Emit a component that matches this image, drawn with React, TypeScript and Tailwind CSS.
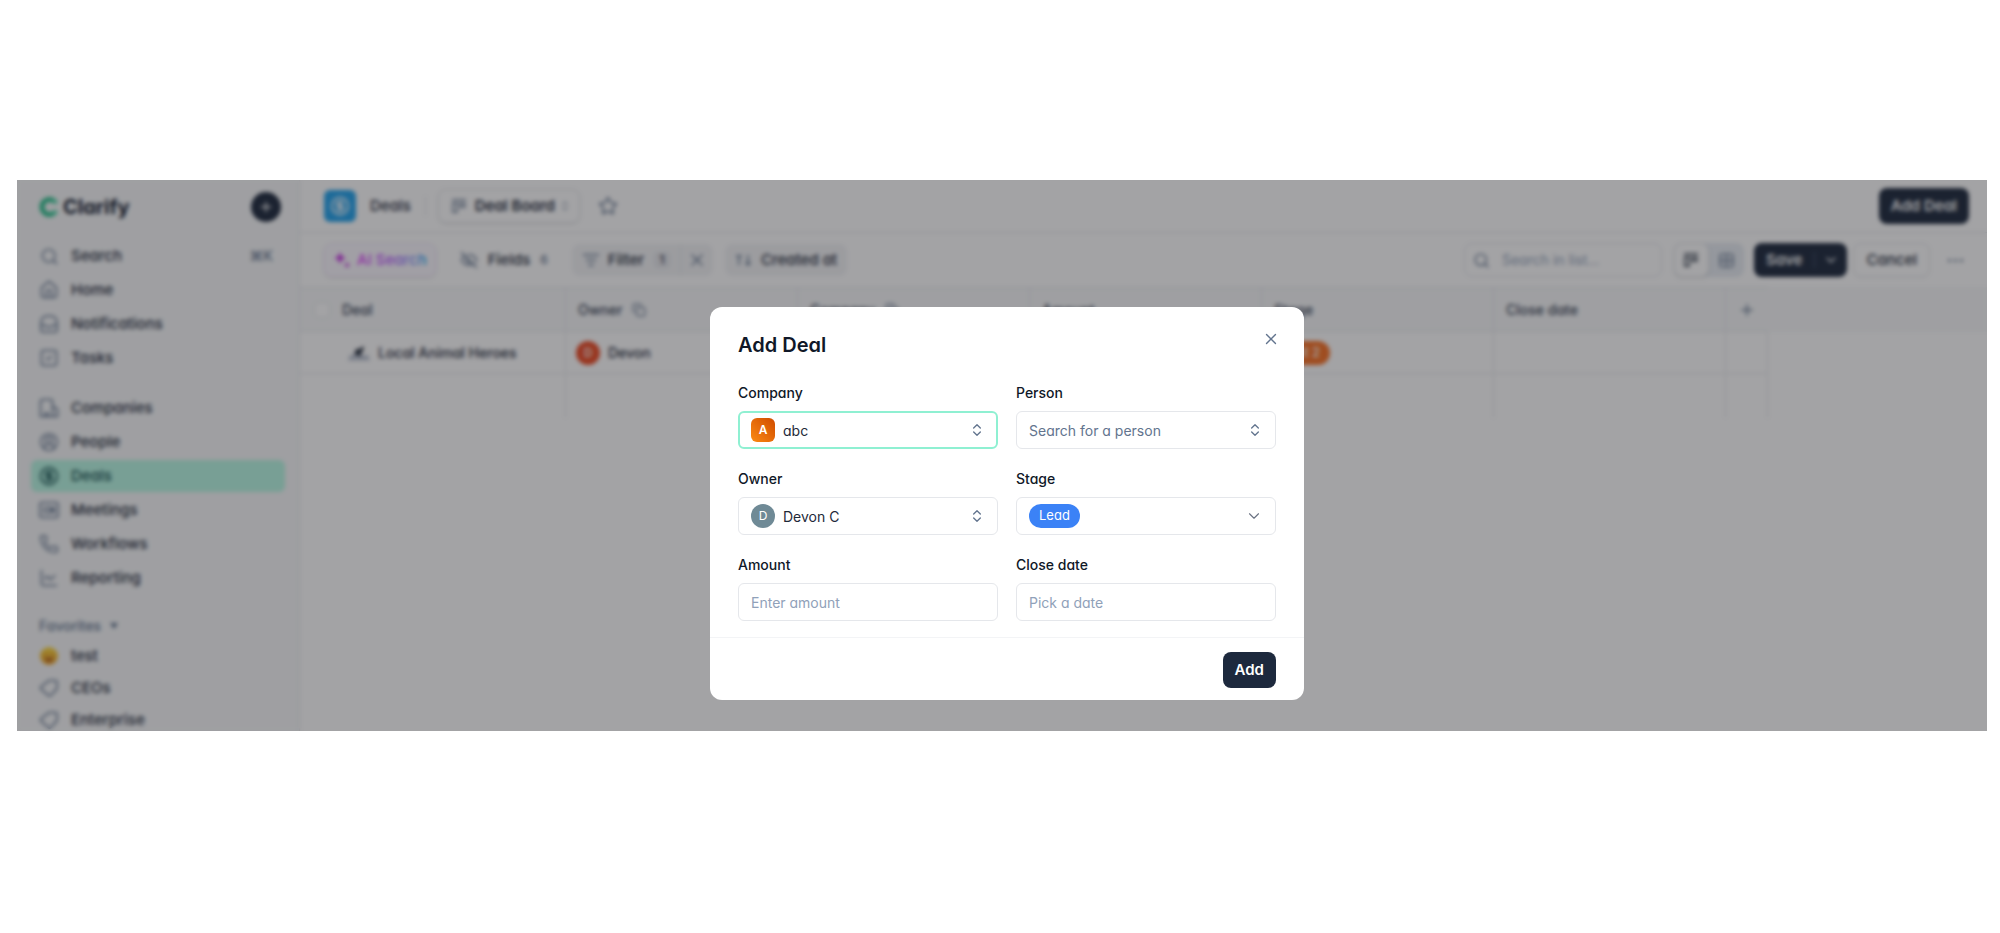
import type { ReactNode } from 'react';
import {
  ChartLine,
  ChevronDown,
  ChevronsUpDown,
  CircleDollarSign,
  CircleUserRound,
  Copy,
  EyeOff,
  Grid2x2,
  House,
  ListFilter,
  Phone,
  Plus,
  Search,
  SquareCheck,
  Star,
  X,
} from 'lucide-react';

const InboxIcon = () => (
  <svg width="20" height="20" viewBox="0 0 20 20" fill="none" stroke="currentColor" strokeWidth="1.6">
    <path d="M2 16V8a6 6 0 0 1 6-6h4a6 6 0 0 1 6 6v8a2 2 0 0 1-2 2H4a2 2 0 0 1-2-2Z" />
    <path d="M2 11h4l1.5 2h5l1.5-2h4" />
  </svg>
);

const CompanyIcon = () => (
  <svg width="20" height="20" viewBox="0 0 20 20" fill="none" stroke="currentColor" strokeWidth="1.6">
    <path d="M1.500 18.500v-15a2 2 0 0 1 2-2h8a2 2 0 0 1 2 2v15zM13.500 8.500l3.500 1.500a2 2 0 0 1 1.500 2v6.500h-5" />
    <path d="M6.500 18v-3h2v3" />
  </svg>
);

const MeetingIcon = () => (
  <svg width="20" height="20" viewBox="0 0 20 20" fill="none" stroke="currentColor" strokeWidth="1.6">
    <rect x="1" y="2.500" width="18" height="15" rx="2" />
    <path d="M5.500 7.500h6v5h-6zM11.500 10l3.500-2.500v5z" />
  </svg>
);

const TagIcon = () => (
  <svg width="20" height="20" viewBox="0 0 20 20" fill="none" stroke="currentColor" strokeWidth="1.6" strokeLinejoin="round">
    <path d="M10.500 2.500h6a1.500 1.500 0 0 1 1.500 1.500v6a2 2 0 0 1-.6 1.400l-5.500 5.800a2 2 0 0 1-2.800 0L2.300 11.400a2 2 0 0 1 0-2.800l6.800-5.500a2 2 0 0 1 1.400-.6Z" />
  </svg>
);

const BoardIcon = ({ size = 16 }: { size?: number }) => (
  <svg width={size} height={size} viewBox="0 0 16 16" fill="none" stroke="currentColor" strokeWidth="1.300">
    <path d="M1 2h14M1.700 5.500h4.500v8.500H1.700zM9.200 5.500h4.600v3.500H9.200z" />
  </svg>
);

const SortIcon = () => (
  <svg width="18" height="18" viewBox="0 0 18 18" fill="none" stroke="currentColor" strokeWidth="1.5" className="mr-2 text-slate-500">
    <path d="M1 5h6M4 5v9M13 4v10M10.500 11.500L13 14l2.500-2.500" />
  </svg>
);

const Smiley = () => (
  <svg width="18" height="18" viewBox="0 0 18 18">
    <defs>
      <linearGradient id="face" x1="0" y1="0" x2="0" y2="1">
        <stop offset="0" stopColor="#ffdc3c" />
        <stop offset="1" stopColor="#f2a325" />
      </linearGradient>
    </defs>
    <circle cx="9" cy="9" r="9" fill="url(#face)" />
    <path d="M4.500 10.500h9a4.500 4.500 0 0 1-9 0Z" fill="#b8661f" />
    <circle cx="6" cy="7" r="1" fill="#b8661f" />
    <circle cx="12" cy="7" r="1" fill="#b8661f" />
  </svg>
);

type NavEntry = { label: string; icon: ReactNode; hint?: string; active?: boolean };

const mainNav: NavEntry[] = [
  { label: 'Search', icon: <Search size={19} strokeWidth={1.8} />, hint: '⌘K' },
  { label: 'Home', icon: <House size={20} strokeWidth={1.8} /> },
  { label: 'Notifications', icon: <InboxIcon /> },
  { label: 'Tasks', icon: <SquareCheck size={20} strokeWidth={1.8} /> },
];

const recordNav: NavEntry[] = [
  { label: 'Companies', icon: <CompanyIcon /> },
  { label: 'People', icon: <CircleUserRound size={20} strokeWidth={1.8} /> },
  { label: 'Deals', icon: <CircleDollarSign size={20} strokeWidth={2} />, active: true },
  { label: 'Meetings', icon: <MeetingIcon /> },
  { label: 'Workflows', icon: <Phone size={20} strokeWidth={1.8} /> },
  { label: 'Reporting', icon: <ChartLine size={20} strokeWidth={1.8} /> },
];

const favorites: NavEntry[] = [
  { label: 'test', icon: <Smiley /> },
  { label: 'CEOs', icon: <TagIcon /> },
  { label: 'Enterprise', icon: <TagIcon /> },
];

const NavItem = ({ label, icon, hint, active }: NavEntry) => (
  <a
    href="#"
    className={
      active
        ? 'flex h-8 shrink-0 items-center rounded-md bg-[#b8f8e4] px-2 text-[#0f4a4a]'
        : 'flex h-8 shrink-0 items-center rounded-md px-2 text-gray-800'
    }
  >
    <span className={active ? 'flex w-5 justify-center' : 'flex w-5 justify-center text-slate-500'}>{icon}</span>
    <span className="ml-3 flex-1">{label}</span>
    {hint && <span className="pr-1 text-sm text-slate-500">{hint}</span>}
  </a>
);

const Sidebar = () => (
  <aside className="flex w-[283px] shrink-0 flex-col overflow-hidden border-r border-gray-200 bg-[#f8f9fa] px-3.5">
    <div className="flex h-[54px] shrink-0 items-center justify-between pr-1 pl-2">
      <div className="flex items-center gap-1 text-xl font-bold text-slate-900">
        <svg width="20" height="20" viewBox="0 0 20 20" fill="none">
          <path d="M16.500 5.500A7.500 7.500 0 1 0 16.500 14.500" stroke="#2cc08d" strokeWidth="5" />
          <path d="M14 2.500l4 4M14 17.500l4-4" stroke="#5fe3b6" strokeWidth="3" />
        </svg>
        Clarify
      </div>
      <button aria-label="Create" className="flex size-[30px] items-center justify-center rounded-full bg-slate-800 text-white">
        <Plus size={16} />
      </button>
    </div>
    <nav className="mt-1.5 flex flex-col gap-0.5 text-[15px] font-medium">
      {mainNav.map((n) => (
        <NavItem key={n.label} {...n} />
      ))}
      <div className="h-3.5 shrink-0" />
      {recordNav.map((n) => (
        <NavItem key={n.label} {...n} />
      ))}
    </nav>
    <div className="mt-5 flex h-6 shrink-0 items-center gap-2 pl-2 text-sm font-medium text-slate-500">
      Favorites
      <svg width="10" height="8" viewBox="0 0 10 8" fill="currentColor">
        <path d="M1 1h8L5 7z" />
      </svg>
    </div>
    <nav className="mt-0.5 flex flex-col text-[15px] font-medium">
      {favorites.map((n) => (
        <NavItem key={n.label} {...n} />
      ))}
    </nav>
  </aside>
);

const Header = () => (
  <header className="flex h-[53px] shrink-0 items-center border-b border-gray-200 pr-[18px] pl-6 text-[15px] font-semibold text-gray-800">
    <span className="flex size-8 items-center justify-center rounded-md bg-[#22a2ec] text-white">
      <CircleDollarSign size={20} />
    </span>
    <span className="ml-3.5 font-medium">Deals</span>
    <span className="ml-3.5 h-5 w-px bg-gray-200" />
    <button className="ml-3 flex h-[34px] items-center rounded-lg border border-gray-200 pr-2 pl-3 shadow-sm">
      <span className="mr-2 text-slate-500">
        <BoardIcon />
      </span>
      Deal Board
      <ChevronsUpDown size={12} className="ml-1 text-slate-500" />
    </button>
    <button aria-label="Favorite" className="ml-[18px] text-slate-500">
      <Star size={20} strokeWidth={1.8} />
    </button>
    <button className="ml-auto h-9 rounded-lg bg-slate-800 px-3 text-white">Add Deal</button>
  </header>
);

const Toolbar = () => (
  <div className="flex h-[54px] shrink-0 items-center pr-6 pl-6 text-[15px] font-medium text-gray-800">
    <button className="flex h-[34px] items-center gap-1.5 rounded-lg border border-purple-100 bg-purple-50/60 px-2 shadow-sm">
      <svg width="18" height="18" viewBox="0 0 18 18" fill="#c430e0">
        <path d="M7 1l1.800 4.200L13 7l-4.200 1.800L7 13l-1.800-4.200L1 7l4.200-1.800zM14 11l1 2 2 1-2 1-1 2-1-2-2-1 2-1z" />
      </svg>
      <span className="bg-linear-to-r from-fuchsia-500 via-purple-500 to-sky-500 bg-clip-text text-transparent">AI Search</span>
    </button>
    <button className="ml-6 flex items-center">
      <EyeOff size={18} className="mr-2.5 text-slate-500" />
      Fields
      <span className="ml-2.5 text-xs text-slate-500">6</span>
    </button>
    <div className="ml-6 flex h-8 items-center rounded-lg bg-gray-100">
      <button className="flex h-full items-center border-r border-gray-200 px-2.5">
        <ListFilter size={18} className="mr-2 text-slate-500" />
        Filter
        <span className="ml-2.5 flex size-4 items-center justify-center rounded-sm bg-gray-200 text-xs">1</span>
      </button>
      <button aria-label="Clear filter" className="px-1.5 text-slate-500">
        <X size={20} strokeWidth={1.8} />
      </button>
    </div>
    <button className="ml-3 flex h-8 items-center rounded-lg bg-gray-100 px-2.5">
      <SortIcon />
      Created at
    </button>

    <label className="ml-auto flex h-[34px] w-[198px] items-center rounded-lg border border-gray-200 px-2">
      <Search size={17} className="mr-3 shrink-0 text-slate-500" />
      <input aria-label="Search in list" placeholder="Search in list..." className="w-full min-w-0 text-sm font-normal outline-none placeholder:text-slate-400" />
    </label>
    <div className="ml-3 flex h-[34px] items-center rounded-lg bg-slate-200/80">
      <button aria-label="Board view" className="flex h-full w-[35px] items-center justify-center rounded-lg border border-gray-200 bg-white shadow-sm">
        <BoardIcon size={16} />
      </button>
      <button aria-label="Grid view" className="flex h-full w-[35px] items-center justify-center text-slate-500">
        <Grid2x2 size={17} />
      </button>
    </div>
    <div className="ml-2.5 flex h-[34px] items-center rounded-lg bg-slate-800 font-semibold text-white">
      <button className="px-3">Save</button>
      <span className="h-4 w-px bg-slate-600" />
      <button aria-label="More save options" className="px-2">
        <ChevronDown size={16} />
      </button>
    </div>
    <button className="ml-1.5 flex h-[34px] items-center rounded-lg border border-gray-200 px-3 shadow-xs">Cancel</button>
    <button aria-label="More" className="ml-[18px] flex gap-[3px]">
      <span className="size-[3px] rounded-full bg-slate-500" />
      <span className="size-[3px] rounded-full bg-slate-500" />
      <span className="size-[3px] rounded-full bg-slate-500" />
    </button>
  </div>
);

const columns = ['Owner', 'Company', 'Amount', 'Stage', 'Close date'];

const cell = 'border-r border-b border-gray-200 px-2.5 py-0';

const DealsTable = () => (
  <div className="bg-linear-to-b from-[#f8f9fa] from-[45px] to-transparent to-[45px]">
    <table className="w-[1468px] table-fixed border-separate border-spacing-0 text-left text-[14px] text-gray-800">
      <colgroup>
        <col className="w-[266px]" />
        <col className="w-[232px]" />
        <col className="w-[232px]" />
        <col className="w-[232px]" />
        <col className="w-[232px]" />
        <col className="w-[232px]" />
        <col className="w-[42px]" />
      </colgroup>
      <thead>
        <tr className="h-[45px] text-gray-700">
          <th className="border-y border-r border-gray-200 pl-3.5 font-medium">
            <div className="flex items-center gap-3">
              <input type="checkbox" aria-label="Select all deals" className="size-4 appearance-none rounded-sm border border-gray-200 bg-white" />
              Deal
            </div>
          </th>
          {columns.map((c, i) => (
            <th key={c} className="border-y border-r border-gray-200 px-3 font-medium">
              <div className="flex items-center gap-2.5">
                {c}
                {i < 2 && <Copy size={14} className="text-slate-500" />}
              </div>
            </th>
          ))}
          <th className="border-y border-gray-200 px-3 text-slate-500">
            <Plus size={18} />
          </th>
        </tr>
      </thead>
      <tbody className="font-medium">
        <tr className="h-[42px]">
          <td className="border-r border-b border-gray-200 py-0 pl-12">
            <div className="flex items-center gap-2">
              <svg width="22" height="18" viewBox="0 0 22 18">
                <path d="M0 16.500l2-5.500h18l2 5.500z" fill="#bcc4d2" />
                <path d="M6 11l2-6 3 0 5-3-1 5-2 2v4l-3-2z" fill="#2a3342" />
              </svg>
              Local Animal Heroes
            </div>
          </td>
          <td className={cell}>
            <div className="flex items-center gap-2">
              <span className="flex size-6 items-center justify-center rounded-full bg-[#ed4a23] text-xs text-white">D</span>
              Devon
            </div>
          </td>
          <td className={cell} />
          <td className={cell} />
          <td className={cell}>
            <span className="flex h-6 w-max items-center rounded-full bg-[#f97023] px-2.5 text-[13px] text-white">Test 2</span>
          </td>
          <td className={cell} />
          <td className={cell} />
        </tr>
        <tr className="h-11">
          {[0, 1, 2, 3, 4, 5, 6].map((i) => (
            <td key={i} className="border-r border-gray-200" />
          ))}
        </tr>
      </tbody>
    </table>
  </div>
);

const box = 'flex h-[38px] w-full items-center rounded-md border border-gray-200 px-3 text-[14px] text-gray-800';

const Field = ({ id, label, children }: { id: string; label: string; children: ReactNode }) => (
  <div className="flex flex-col gap-2">
    <label htmlFor={id} className="text-[14px] leading-5 font-medium text-gray-900">
      {label}
    </label>
    {children}
  </div>
);

const AddDealDialog = () => (
  <div role="dialog" aria-labelledby="dialog-title" className="w-[594px] rounded-xl bg-white">
    <div className="flex items-start justify-between pt-6 pr-6 pl-7">
      <h2 id="dialog-title" className="text-xl leading-7 font-semibold text-gray-900">
        Add Deal
      </h2>
      <button aria-label="Close" className="flex h-4 items-center text-slate-500">
        <X size={18} strokeWidth={1.8} />
      </button>
    </div>
    <div className="mt-6 grid grid-cols-2 gap-x-[18px] gap-y-5 px-7">
      <Field id="company" label="Company">
        <button id="company" className="flex h-[38px] w-full items-center rounded-md border-2 border-[#8ff0d2] px-[11px] text-[14px] text-gray-800">
          <span className="mr-2 flex size-6 items-center justify-center rounded-md bg-linear-to-tr from-[#fb8a14] to-[#cf4a00] text-xs font-semibold text-white">A</span>
          abc
          <ChevronsUpDown size={16} className="ml-auto text-slate-500" />
        </button>
      </Field>
      <Field id="person" label="Person">
        <button id="person" className={box}>
          <span className="text-slate-500">Search for a person</span>
          <ChevronsUpDown size={16} className="ml-auto text-slate-500" />
        </button>
      </Field>
      <Field id="owner" label="Owner">
        <button id="owner" className={box}>
          <span className="mr-2 flex size-6 items-center justify-center rounded-full bg-[#6f8a96] text-xs text-white">D</span>
          Devon C
          <ChevronsUpDown size={16} className="ml-auto text-slate-500" />
        </button>
      </Field>
      <Field id="stage" label="Stage">
        <button id="stage" className={box}>
          <span className="flex h-6 items-center rounded-full bg-[#3b82f6] px-2.5 text-[13px] text-white">Lead</span>
          <ChevronDown size={18} strokeWidth={1.5} className="ml-auto text-gray-500" />
        </button>
      </Field>
      <Field id="amount" label="Amount">
        <input id="amount" placeholder="Enter amount" className={`${box} placeholder:text-slate-400`} />
      </Field>
      <Field id="close-date" label="Close date">
        <input id="close-date" placeholder="Pick a date" className={`${box} placeholder:text-slate-400`} />
      </Field>
    </div>
    <div className="mt-4 flex justify-end border-t border-gray-100 px-7 pt-3.5 pb-3">
      <button className="h-9 rounded-lg bg-slate-800 px-3 text-[15px] font-semibold text-white">Add</button>
    </div>
  </div>
);

export default function App() {
  return (
    <div className="flex h-screen flex-col bg-white pt-[180px] pr-[13px] pb-[202px] pl-[17px] font-['Inter',sans-serif] [font-feature-settings:'cv11']">
      <div className="relative flex min-h-0 flex-1 overflow-hidden">
        <Sidebar />
        <main className="flex min-w-0 flex-1 flex-col bg-white">
          <Header />
          <Toolbar />
          <DealsTable />
        </main>
        <div className="absolute inset-0 flex items-start justify-center bg-[#19191d]/40 pt-[127px] pl-2.5 backdrop-blur-[2px]">
          <AddDealDialog />
        </div>
      </div>
    </div>
  );
}
